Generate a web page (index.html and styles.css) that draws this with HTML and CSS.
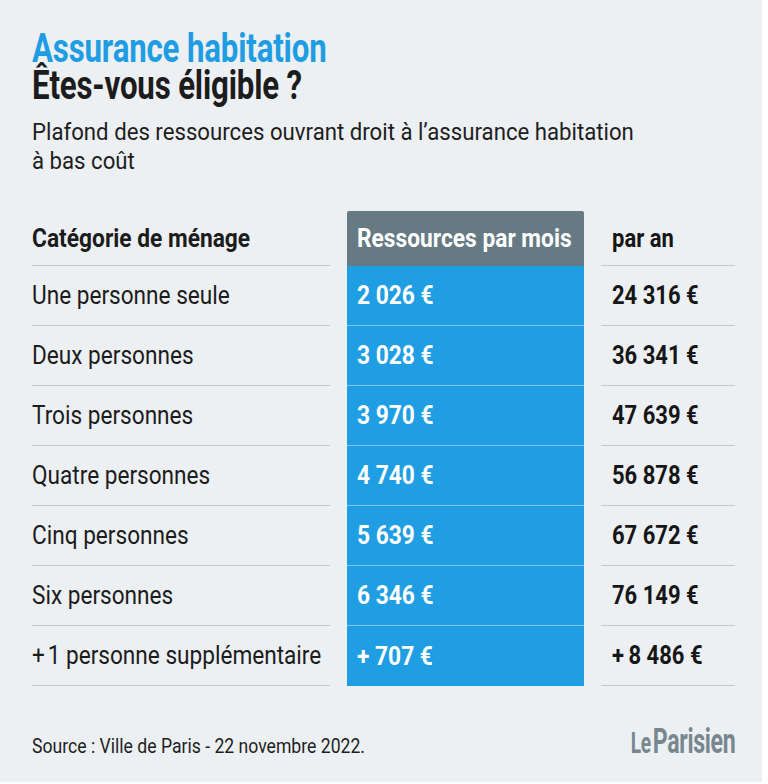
FILE: index.html
```html
<!DOCTYPE html>
<html lang="fr">
<head>
<meta charset="utf-8">
<title>Assurance habitation</title>
<link rel="stylesheet" href="styles.css">
</head>
<body>
<div class="panel">
  <h1 class="title">
    <span class="line title-blue">Assurance habitation</span>
    <span class="line">Êtes-vous éligible ?</span>
  </h1>
  <p class="sub">
    <span class="line">Plafond des ressources ouvrant droit à l’assurance habitation</span>
    <span class="line">à bas coût</span>
  </p>

  <div class="table">
    <div class="cell head"><span class="t b">Catégorie de ménage</span></div>
    <div class="cell head mid"><span class="t b">Ressources par mois</span></div>
    <div class="cell head right"><span class="t b">par an</span></div>

    <div class="cell"><span class="t r">Une personne seule</span></div>
    <div class="cell mid"><span class="t b">2 026 €</span></div>
    <div class="cell right"><span class="t b">24 316 €</span></div>

    <div class="cell"><span class="t r">Deux personnes</span></div>
    <div class="cell mid"><span class="t b">3 028 €</span></div>
    <div class="cell right"><span class="t b">36 341 €</span></div>

    <div class="cell"><span class="t r">Trois personnes</span></div>
    <div class="cell mid"><span class="t b">3 970 €</span></div>
    <div class="cell right"><span class="t b">47 639 €</span></div>

    <div class="cell"><span class="t r">Quatre personnes</span></div>
    <div class="cell mid"><span class="t b">4 740 €</span></div>
    <div class="cell right"><span class="t b">56 878 €</span></div>

    <div class="cell"><span class="t r">Cinq personnes</span></div>
    <div class="cell mid"><span class="t b">5 639 €</span></div>
    <div class="cell right"><span class="t b">67 672 €</span></div>

    <div class="cell"><span class="t r">Six personnes</span></div>
    <div class="cell mid"><span class="t b">6 346 €</span></div>
    <div class="cell right"><span class="t b">76 149 €</span></div>

    <div class="cell"><span class="t r">+&#8201;1 personne supplémentaire</span></div>
    <div class="cell mid last"><span class="t b">+ 707 €</span></div>
    <div class="cell right"><span class="t b">+&#8201;8 486 €</span></div>
  </div>

  <div class="foot">
    <span class="t source">Source : Ville de Paris - 22 novembre 2022.</span>
    <span class="t logo"><span class="le">Le</span><span class="pa">Parisien</span></span>
  </div>
</div>
</body>
</html>
```

FILE: styles.css
```css
body {
  margin: 0;
  background: #ffffff;
  font-family: Roboto, "Liberation Sans", sans-serif;
  color: #1c1c1c;
}

.panel {
  width: 762px;
  height: 782px;
  box-sizing: border-box;
  padding: 30px 27px 0 32px;
  background: #edf0f3;
}

.line {
  display: block;
  width: max-content;
  white-space: nowrap;
  transform-origin: 0 50%;
}

.t {
  display: inline-block;
  white-space: nowrap;
  transform-origin: 0 50%;
}

.title {
  margin: 0;
  font-size: 40px;
  line-height: 37px;
  font-weight: 700;
  letter-spacing: -0.2px;
}

.title .line {
  transform: scaleX(0.78);
}

.title-blue {
  color: #1f9de2;
}

.sub {
  margin: 14px 0 0;
  font-size: 23px;
  line-height: 29px;
  font-weight: 400;
  color: #1e1e1e;
}

.sub .line {
  transform: scaleX(0.965);
}

.table {
  display: grid;
  grid-template-columns: 298px 237px 134px;
  column-gap: 17px;
  margin-top: 35px;
}

.cell {
  display: flex;
  align-items: center;
  height: 60px;
  box-sizing: border-box;
  border-bottom: 1px solid #c3c7cb;
  font-size: 25px;
  line-height: 25px;
}

.cell.head {
  height: 55px;
}

.mid {
  padding-left: 10px;
  background: #1f9ee3;
  color: #ffffff;
  border-bottom-color: #7cc4ee;
}

.mid.head {
  background: #667a84;
  border-bottom: 0;
  border-radius: 2px 2px 0 0;
}

.mid.last {
  border-bottom: 0;
}

.right {
  padding-left: 11px;
  color: #161616;
}

.t.r {
  font-weight: 400;
  transform: scaleX(0.904);
}

.t.b {
  font-weight: 700;
  transform: scaleX(0.91);
}

.right .t.b {
  transform: scaleX(0.88);
}

.foot {
  display: flex;
  justify-content: space-between;
  align-items: baseline;
  margin-top: 35px;
}

.source {
  font-size: 20px;
  line-height: 24px;
  color: #1e1e1e;
  transform: scaleX(0.88);
}

.logo {
  color: #78878f;
  font-weight: 700;
  transform: scaleX(0.66);
  transform-origin: 100% 50%;
  letter-spacing: -0.5px;
}

.logo .le {
  font-size: 29px;
  margin-right: 3px;
}

.logo .pa {
  font-size: 35px;
}
```
